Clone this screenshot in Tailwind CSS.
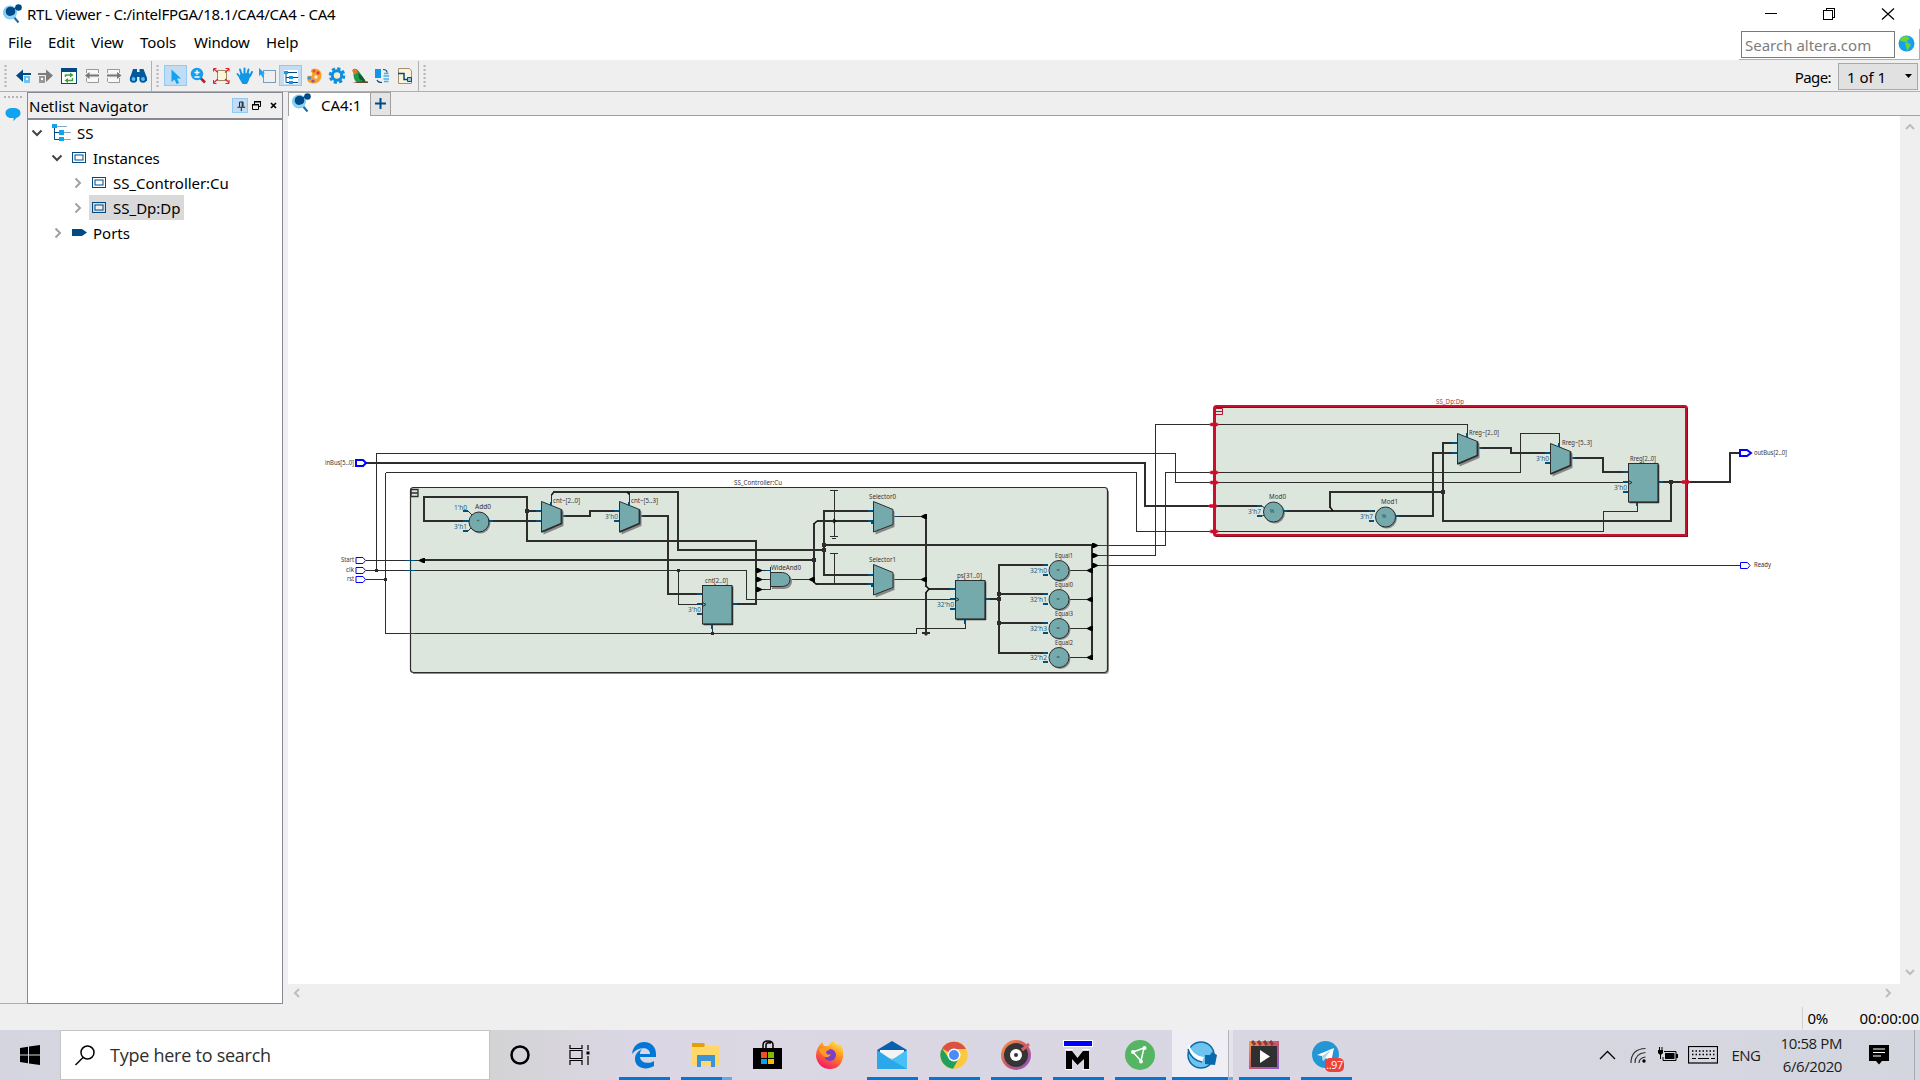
<!DOCTYPE html>
<html lang="en">
<head>
<meta charset="utf-8">
<title>RTL Viewer</title>
<script src="https://cdn.jsdelivr.net/npm/@tailwindcss/browser@4"></script>
</head>
<body class="w-[1920px] h-[1080px] overflow-hidden bg-[#efefef] text-black font-['Noto_Sans','Open_Sans',sans-serif] text-[15px] flex flex-col">

<svg width="0" height="0" class="absolute">
  <defs>
    <symbol id="logo" viewBox="0 0 20 20"><path d="M11 12l5.500 6.500" stroke="#1b6aa5" stroke-width="2"/><circle cx="8" cy="8.500" r="7" fill="#7fcdf4"/><circle cx="8.500" cy="7.500" r="4.800" fill="#004a86"/><path d="M3 10q5 4 11-.5l-.5 3q-5 3-9 1z" fill="#8fd3f5"/><path d="M9 7l6-4" stroke="#004a86" stroke-width="1.500"/><circle cx="16.500" cy="3.500" r="3.300" fill="#004a86"/></symbol>
    <symbol id="inst" viewBox="0 0 14 11"><rect x=".5" y=".5" width="13" height="10" fill="none" stroke="#004a86"/><rect x="3" y="3" width="8" height="5" fill="#fff" fill-opacity=".6" stroke="#004a86"/></symbol>
    <symbol id="down" viewBox="0 0 12 8"><path d="M1.500 1.500L6 6l4.500-4.500" fill="none" stroke="#444" stroke-width="2"/></symbol>
    <symbol id="right" viewBox="0 0 8 12"><path d="M1.500 1.500L6 6l-4.500 4.500" fill="none" stroke="#a0a0a0" stroke-width="2"/></symbol>
    <symbol id="grip" viewBox="0 0 3 22"><path d="M1.500 0v22" stroke="#b4b4b4" stroke-width="2" stroke-dasharray="2 2"/></symbol>
  </defs>
</svg>

<!-- title bar -->
<header class="h-[28px] shrink-0 bg-white flex items-center">
  <svg class="w-5 h-5 ml-[2px]"><use href="#logo"/></svg>
  <span class="ml-[5px] mt-px whitespace-nowrap tracking-[-0.24px]">RTL Viewer - C:/intelFPGA/18.1/CA4/CA4 - CA4</span>
  <svg class="ml-auto mr-[25px]" width="131" height="28" viewBox="1764 0 131 28" fill="none" stroke="#000" shape-rendering="crispEdges"><path d="M1765 13.500h12M1823.500 10.500h9v9h-9zM1826 10v-1.500h8.500v9h-2"/><path d="M1882 8.500l12 11M1894 8.500l-12 11" shape-rendering="auto" stroke-width="1.200"/></svg>
</header>

<!-- menu bar -->
<nav class="h-[33px] shrink-0 bg-white flex border-b border-[#efefef]">
  <div class="flex pl-2 pt-[3px] h-[26px] gap-4"><span class="w-[24px] whitespace-nowrap">File</span><span class="w-[27px] whitespace-nowrap">Edit</span><span class="w-[33px] whitespace-nowrap tracking-[-0.1px]">View</span><span class="w-[38px] whitespace-nowrap tracking-[-0.1px]">Tools</span><span class="w-[56px] whitespace-nowrap tracking-[-0.2px]">Window</span><span class="whitespace-nowrap tracking-[-0.1px]">Help</span></div>
  <div class="ml-auto mt-px h-[31px] w-[181px] border-b border-r border-[#b0b0b0] flex pl-[2px] pt-[2px]">
    <div class="w-[154px] h-[27px] border border-[#7a7a7a] text-[#7d7d7d] pl-[3px] leading-[26px] whitespace-nowrap">Search altera.com</div>
    <svg class="ml-[3px] mt-[4px]" width="17" height="17" viewBox="0 0 17 17"><circle cx="8.500" cy="8.500" r="8" fill="#12a0f0"/><path d="M3 2.500q4-2 7-1l2 2-3 2 1 2-2 0-3-1-3-1zM7 8l4 0 2 2-2 3-2 3-1-4z" fill="#6fd32c"/></svg>
  </div>
</nav>

<!-- toolbar -->
<div class="h-[31px] shrink-0 border-b border-[#b0b0b0] flex items-center">
  <svg class="ml-[4px] w-[3px] h-[22px]"><use href="#grip"/></svg>
  <div class="flex ml-[5px] mb-px">
    <svg width="23" height="21" viewBox="0 0 23 21"><path d="M4 10.500l7-6v3.500h8v5h-8v4z" fill="#004a86"/><rect x="11.500" y="10.500" width="7" height="8" fill="#6cc4f3" stroke="#efefef"/><rect x="14" y="13" width="2" height="2" fill="#fff"/></svg>
    <svg width="23" height="21" viewBox="0 0 23 21"><path d="M18 10.500l-7-6v3.500H3v5h8v4z" fill="#7d7d7d"/><rect x="3.500" y="10.500" width="7" height="8" fill="#999" stroke="#efefef"/><rect x="6" y="13" width="2" height="2" fill="#fff"/></svg>
    <svg width="23" height="21" viewBox="0 0 23 21"><rect x="3.500" y="3.500" width="15" height="15" fill="#fff" stroke="#004a86"/><path d="M3 3h16v4H3z" fill="#004a86"/><path d="M7.500 12v-2h5M14.500 13v2.500h-5" stroke="#3da23d" stroke-width="1.400" fill="none"/><path d="M12 7.500l3.500 2.500-3.500 2.500zM10 13l-3.500 2.500L10 18z" fill="#3da23d"/></svg>
    <svg width="23" height="21" viewBox="0 0 23 21"><path d="M5.500 8V4.500h12V8M5.500 13v3.500l1 1h11V13" fill="#f8f8f8" stroke="#999"/><path d="M7 10.500h11" stroke="#777" stroke-width="2"/><path d="M4 10.500L8.500 7v7z" fill="#777"/></svg>
    <svg width="23" height="21" viewBox="0 0 23 21"><path d="M3.500 8V4.500h12V8M3.500 13v3.500l1 1h11V13" fill="#f8f8f8" stroke="#999"/><path d="M3 10.500h11" stroke="#777" stroke-width="2"/><path d="M17.500 10.500L13 7v7z" fill="#777"/></svg>
    <svg width="23" height="21" viewBox="0 0 23 21"><path d="M6 4h4v3h2.500V4h4l3.500 9v3h-7v-4h-3v4H3v-3z" fill="#005a9c"/><circle cx="6.500" cy="14" r="3.700" fill="#005a9c"/><circle cx="16" cy="14" r="3.700" fill="#005a9c"/><circle cx="6.500" cy="14" r="1.900" fill="#5bbdf0"/><circle cx="16" cy="14" r="1.900" fill="#5bbdf0"/></svg>
  </div>
  <div class="w-px h-[30px] bg-[#b0b0b0] ml-[1px]"></div>
  <svg class="ml-[4px] w-[3px] h-[22px]"><use href="#grip"/></svg>
  <div class="flex ml-[5px] mb-px">
    <svg class="bg-[#c2dcf3]" width="23" height="21" viewBox="0 0 23 21"><rect x=".5" y=".5" width="22" height="20" fill="none" stroke="#90c8f6"/><path d="M7.500 4.500V17l3-2.500 2 4.500 2.500-1-2-4.500h4z" fill="#0fa3f2"/></svg>
    <svg width="23" height="21" viewBox="0 0 23 21"><path d="M13 12.500l5 5" stroke="#b3202c" stroke-width="2.500"/><circle cx="10" cy="9" r="6.200" fill="#14a0ee"/><path d="M10 5v5M7.500 7.500h5M7.500 12h5" stroke="#fff" stroke-width="1.300"/></svg>
    <svg width="23" height="21" viewBox="0 0 23 21"><path d="M7.500 5.500h8l1 1.500v8.500h-9z" fill="#fdf6da" stroke="#a08a60"/><path d="M4 4l4 3.500M19 4l-4 3.500M4 17.500l4-3.500M19 17.500l-4-3.500" stroke="#e0202c" stroke-width="1.200"/><path d="M3.500 6.500v-3h3M15.500 3.500h3.500v3M3.500 15v3.500h3M19 15v3.500h-3.500" fill="none" stroke="#e0202c"/></svg>
    <svg width="23" height="21" viewBox="0 0 23 21"><path d="M8.500 9L7 4.500M11.500 8V3.500M14.500 8.500l1-4M17 11l2-4M4.500 9l4 5" stroke="#1097e6" stroke-width="2" stroke-linecap="round"/><path d="M7.500 8.500l8.500-.5 1.500 2-1.500 5-2 4H9.500L6 13z" fill="#1097e6"/></svg>
    <svg width="23" height="21" viewBox="0 0 23 21"><path d="M7.500 5.500h12v12h-12z" fill="none" stroke="#004a86" stroke-dasharray="1 1"/><path d="M3 3v8l2-1.500 1.500 3 1.500-.7-1.500-3.300H9z" fill="#1ba1ee"/></svg>
    <svg class="bg-[#c2dcf3]" width="23" height="21" viewBox="0 0 23 21"><rect x=".5" y=".5" width="22" height="20" fill="none" stroke="#90c8f6"/><rect x="5" y="5" width="14" height="14" fill="#fff"/><path d="M7 8v9.500h4M7 12.500h4M13 12.500h6M13 17.500h6M9 7.500h9" stroke="#004a86" fill="none"/><path d="M5 6h4v3H5zM10 11h4v3h-4zM10 16h4v3h-4z" fill="#0f97e8"/></svg>
    <svg width="23" height="21" viewBox="0 0 23 21"><path d="M12 3.500c5 0 8 3 7.500 7.500-.5 5-4 7.500-8.500 7.500S4.500 15 5 12q1-2 3-1 3 0 2-3-3-3 2-4.500z" fill="#f7a12a"/><circle cx="7.500" cy="13" r="1.800" fill="#3c8fe0"/><circle cx="11" cy="16" r="1.600" fill="#8a4fc0"/><circle cx="14" cy="12" r="1.700" fill="#efefef"/><circle cx="16" cy="8" r="1.700" fill="#e0383c"/><circle cx="12" cy="6" r="1.500" fill="#d8542a"/></svg>
    <svg width="23" height="21" viewBox="0 0 23 21"><circle cx="12" cy="10.500" r="7" fill="none" stroke="#0b8fe0" stroke-width="2.600" stroke-dasharray="3.200 2.300"/><circle cx="12" cy="10.500" r="4.700" fill="#fce9c8" stroke="#0b8fe0" stroke-width="3"/></svg>
    <svg width="23" height="21" viewBox="0 0 23 21"><path d="M5 4q4-1 6 2.500l6 8.500 1 3H9Q5 14 5.500 8z" fill="#1f9a48"/><path d="M4 5.500Q6 2.500 9 4.500l.5 3.500-3 1.500z" fill="#e3762a"/><path d="M10 8q6 4 7.500 9l-6-3z" fill="#0c5a34"/><path d="M4 18h16v-1.500l-5-.5z" fill="#6a4630"/></svg>
    <svg width="23" height="21" viewBox="0 0 23 21"><path d="M4 4h6v9H4z" fill="#0f97e8"/><path d="M13 8.500h4.500M12.500 11h5.500M12.500 14h5.500M13 16.500h4.500" stroke="#4aaee8" stroke-width="1.500"/><path d="M12 4.500q4 0 4 3M6 15q1 2.500 5 2.500" fill="none" stroke="#004a86" stroke-width="1.200"/></svg>
    <svg width="23" height="21" viewBox="0 0 23 21"><path d="M4.500 3.500h11l2 2.500v12.500h-13z" fill="#fdf3d8" stroke="#a39272"/><path d="M4 8.500h6v6h8" fill="none" stroke="#004a86" stroke-width="1.500"/><path d="M13.500 12.500h4v4h-4z" fill="#8ccbf0" stroke="#004a86"/></svg>
  </div>
  <div class="w-px h-[30px] bg-[#b0b0b0] ml-[1px]"></div>
  <svg class="ml-[4px] w-[3px] h-[22px]"><use href="#grip"/></svg>
  <span class="ml-auto mt-[2px] tracking-[-0.6px]">Page:</span>
  <div class="ml-[7px] mr-[2px] w-[80px] h-[27px] border border-[#a8a8a8] bg-[#e1e1e1] flex items-center justify-between pl-[8px] pr-[5px]"><span class="mt-[2px]">1 of 1</span><svg width="7" height="5"><path d="M0 0h7L3.500 4z"/></svg></div>
</div>

<!-- work area -->
<main class="h-[912px] shrink-0 flex">
  <aside class="w-[27px] border-b border-[#b0b0b0] flex flex-col items-start">
    <svg class="mt-[4px] ml-[4px]" width="19" height="2"><path d="M0 1h19" stroke="#b4b4b4" stroke-width="2" stroke-dasharray="2 2"/></svg>
    <svg class="mt-[9px] ml-[5px]" width="16" height="15" viewBox="0 0 16 15"><path d="M8 1c5 0 7.500 2 7.500 5S13 10.500 11 11q-.5 2-3 3 1-1 .5-3C3 11.500 .5 9 .5 6s2.500-5 7.500-5z" fill="#0fa3f2"/></svg>
  </aside>
  <section class="w-[256px] bg-white border border-[#858992] flex flex-col">
    <div class="h-[27px] bg-[#efefef] border-b-2 border-[#858992] flex items-center pl-[1px] pr-[3px]">
      <span class="mt-[2px]">Netlist Navigator</span>
      <div class="ml-auto flex items-center">
        <svg class="bg-[#c2dcf3] border border-[#90c8f6]" width="16" height="15" viewBox="0 0 16 15" fill="none" stroke="#000"><path d="M7.500 9V3.500h4V9M5 9.500h9M9.500 10v4M10.500 4v5"/></svg>
        <svg class="ml-[4px]" width="9" height="9" viewBox="0 0 9 9" fill="none" stroke="#000"><path d="M2.500 3V1h6v4.500H7M.5 4h6v4.500h-6zM0 3.500h7M2 .5h7"/></svg>
        <svg class="ml-[9px] mr-[2px]" width="7" height="7" viewBox="0 0 7 7"><path d="M1 1l5 5M6 1L1 6" stroke="#000" stroke-width="1.700"/></svg>
      </div>
    </div>
    <div class="flex flex-col leading-[25px]">
      <div class="h-[25px] flex items-center pl-[3px]"><svg class="w-3 h-2"><use href="#down"/></svg><svg class="ml-[9px]" width="19" height="18" viewBox="0 0 19 18"><path d="M2.500 2v13.500H19M2 8.500h17M4 2.500h11" fill="none" stroke="#8aa7c4"/><path d="M2.500 4v11.500h5M2.500 8.500h5" fill="none" stroke="#004a86"/><path d="M0 0h5v4H0zM7 6h5v5H7zM7 13h5v4H7z" fill="#0fa3f2"/></svg><span class="ml-[6px] mt-px">SS</span></div>
      <div class="h-[25px] flex items-center pl-[23px]"><svg class="w-3 h-2"><use href="#down"/></svg><svg class="ml-[9px] w-[14px] h-[11px]"><use href="#inst"/></svg><span class="ml-[7px] mt-px tracking-[-0.1px]">Instances</span></div>
      <div class="h-[25px] flex items-center pl-[46px]"><svg class="w-2 h-3"><use href="#right"/></svg><svg class="ml-[10px] w-[14px] h-[11px]"><use href="#inst"/></svg><span class="ml-[7px] mt-px tracking-[-0.05px]">SS_Controller:Cu</span></div>
      <div class="h-[25px] flex items-center pl-[46px]"><svg class="w-2 h-3"><use href="#right"/></svg><div class="ml-[7px] pl-[3px] pr-[3px] h-[25px] flex items-center bg-[#d9d9d9]"><svg class="w-[14px] h-[11px]"><use href="#inst"/></svg><span class="ml-[7px] mt-px">SS_Dp:Dp</span></div></div>
      <div class="h-[25px] flex items-center pl-[26px]"><svg class="w-2 h-3"><use href="#right"/></svg><svg class="ml-[10px]" width="15" height="9"><path d="M0 1h10l5 3.500L10 8H0z" fill="#004a86"/></svg><span class="ml-[6px] mt-px">Ports</span></div>
    </div>
  </section>

  <section class="ml-[5px] flex-1 flex flex-col">
    <div class="h-[24px] flex border-b border-[#a0a0a0]">
      <div class="w-[82px] h-[24px] bg-white border-l border-t border-[#a0a0a0] flex items-start"><svg class="w-5 h-5 ml-[2px]"><use href="#logo"/></svg><span class="ml-[10px] leading-[24px]">CA4:1</span></div>
      <div class="w-[21px] h-[23px] border border-b-0 border-[#a0a0a0] bg-[#e4e4e4] flex items-start pt-[5px] justify-center"><svg width="11" height="11"><path d="M5.500 0v11M0 5.500h11" stroke="#004a86" stroke-width="2"/></svg></div>
    </div>
    <div class="flex">
      <svg class="bg-white" width="1612" height="868" viewBox="288 116 1612 868" font-size="6.200" font-family="Noto Sans, sans-serif">
        <defs>
          <g id="mux"><path d="M2 2v31l20-8.500V10z" fill="#888"/><path d="M0 0v30.500L20 22V8z" fill="#75aaad" stroke="#2d2d2d"/><path d="M0 30.500L20 22V8" fill="none" stroke="#2d2d2d" stroke-width="1.800"/></g>
          <g id="sel"><path d="M2 2v31l19-7.500V10z" fill="#888"/><path d="M0 0v30.500L19.500 23V8z" fill="#75aaad" stroke="#2d2d2d"/></g>
          <g id="op"><circle cx="1.200" cy="1.200" r="10.200" fill="#888"/><circle r="10" fill="#75aaad" stroke="#2d2d2d"/></g>
          <g id="reg"><rect width="29.500" height="38.500" fill="#75aaad" stroke="#2d2d2d"/><path d="M1 39h29.500M30 1v38.500" stroke="#2d2d2d" stroke-width="1.500"/><path d="M0 17l3.500 2L0 21" fill="none" stroke="#2d2d2d"/></g>
          <path id="port" d="M.5-3h7L10 0 7.500 3h-7z" fill="#fff" stroke="#00f"/>
          <path id="arrow" d="M-2-2.500h2L4-.5v1L0 2.500h-2z" fill="#000"/>
          <path id="arrowin" d="M2-2.500H0L-4-.5v1L0 2.500h2z" fill="#000"/>
          <g id="rport"><path d="M-5 0H5M-3.500-1h7M-3.500 1h7" stroke="#c8102e" stroke-width="1.300"/></g>
        </defs>

        <!-- module frames -->
        <path d="M413 673.500h693q2.500 0 2.500-3V491" fill="none" stroke="#8e8e8e"/>
        <rect x="410.500" y="487.500" width="697" height="185" rx="3" fill="#dce6dd" stroke="#2d2d2d" stroke-width="1.200"/>
        <path d="M411 489.500h7v7h-7zM411 493h7" fill="none" stroke="#2d2d2d" stroke-width="1.300"/>
        <rect x="1214.500" y="406.500" width="472" height="129" rx="2" fill="#dce6dd" stroke="#c8102e" stroke-width="3"/>
        <path d="M1216 407.500h469M1687.500 408v128M1216 536.500h472" stroke="#860d22" fill="none"/>
        <path d="M1215 408.500h7.500v6h-7.500M1215 411.500h7" fill="none" stroke="#b3152c"/>

        <!-- single-bit nets -->
        <g fill="none" stroke="#2d2d2d" shape-rendering="crispEdges">
          <path d="M366 570.500h380.500v29H955M376.500 570.500v-117h799v29H1628M678.500 570.500v34H702"/>
          <path d="M366 579.500h19.500M385.500 472.500h751v59h467v-20h34V502M385.500 472.500v161h531v-5h49V619M712.500 633.500V624"/>
          <path d="M366 560.500h58M551.500 504v-10M629.500 504v-11M790 579.500h23M760 570.500h11M760 579.500h11M760 589.500h11M770.500 567v23"/>
          <path d="M830 490.500h8M834.500 490v46M830 536.500h8M832 538.500h4M830 553.500h8M834.500 553v30"/>
          <path d="M893 516.500h32M893 579.500h32M1069 570.500h23M1069 599.500h23M1069 628.500h23M1069 657.500h23"/>
          <path d="M1096 545.500h69.500v-73h355v-39h39V446M1096 555.500h59.500v-131h312V435M1096 565.500h644"/>
        </g>
        <!-- buses -->
        <g fill="none" stroke="#2d2d2d" stroke-width="2" shape-rendering="crispEdges">
          <path d="M366 463h779v43h117"/>
          <path d="M469 521h-45v-24h103v44h229v63h-23M489 521h53M527 511h15M562 516h28v-5h30M553 492h125v58h146M640 516h28v78h34"/>
          <path d="M420 560h394M814 583v-60M817 521h56M816 584h57M873 511h-49v64h49M824 545h268M926 516v71M926 592v41M928 589h27M922 632.500h8"/>
          <path d="M986 599h13M1048 565h-49v88h49M999 594h49M999 623h49M1092 545v115"/>
          <path d="M1283 511h92M1330 508v-16h113M1395 516h38v-63h24M1457 443h-14v78h228v-39M1478 448h33v5h39M1571 458h32v14h25M1659 482h71v-29h9"/>
        </g>
        <path d="M551.500 495l2-2.500M627 492l2.500 2.500M814 524l3-3M814 582l2.500 2.500M926 586l3 3-3 3.500M833.500 519l2 2-2 2M1330 507l3 4" fill="none" stroke="#111" stroke-width="1.500"/>
        <g fill="#2d2d2d">
          <path d="M525 509h4v4h-4zM375 569h3v3h-3zM384 578h3v3h-3zM677 569h3v3h-3zM711 632h3v3h-3zM812 558h4v4h-4zM822 543h4v4h-4zM822 548h4v4h-4zM997 592h4v4h-4zM997 597h4v4h-4zM997 621h4v4h-4zM1441 490h4v4h-4zM1669 480h4v4h-4zM1321 510h2v2h-2zM922 632h8l-4 4z"/>
        </g>
        <use href="#arrow" x="758" y="570.500"/><use href="#arrow" x="758" y="579.500"/><use href="#arrow" x="758" y="589.500"/>
        <use href="#arrow" x="1094" y="545.500"/><use href="#arrow" x="1094" y="555.500"/><use href="#arrow" x="1094" y="565.500"/>
        <use href="#arrowin" x="423" y="560.500"/><use href="#arrowin" x="813" y="579.500"/><use href="#arrowin" x="925" y="516.500"/><use href="#arrowin" x="925" y="579.500"/>
        <use href="#arrowin" x="1091" y="570.500"/><use href="#arrowin" x="1091" y="599.500"/><use href="#arrowin" x="1091" y="628.500"/><use href="#arrowin" x="1091" y="657.500"/>

        <!-- pin stubs -->
        <g stroke="#00507f" stroke-width="2" shape-rendering="crispEdges">
          <path d="M463 521h6M463 511h5M463 531h5M488 521h5M536 511h6M536 521h6M561 516h5M614 511h6M614 521h6M639 516h5M551 502v4M629 502v4"/>
          <path d="M697 594h6M697 604h6M697 614h6M733 604h4M712 624v5M868 511h6M868 521h6M868 575h6M868 584h6M871 523h3M871 586h3"/>
          <path d="M950 589h5M950 599h5M950 609h5M986 599h4M965 619v5M1043 565h5M1043 575h5M1043 594h5M1043 604h5M1043 623h5M1043 633h5M1043 653h5M1043 662h5"/>
          <path d="M1257 506h5M1257 516h5M1283 511h4M1369 511h5M1369 521h5M1395 516h4M1452 443h5M1452 453h5M1477 448h5M1467 433v4M1545 453h5M1545 463h5M1571 458h4M1559 443v4M1623 472h5M1623 482h5M1623 492h5M1659 482h4M1637 501v5"/>
        </g>
        <path d="M406 560.500h9M406 570.500h9M406 633.500h9M1100 545.500h11M1100 555.500h11M1100 565.500h11M790 579.500h4M893 516.500h4M893 579.500h4M766 570.500h5M766 579.500h5M766 589.500h5" stroke="#00507f" shape-rendering="crispEdges"/>
        <path d="M468 511l4 4M468 531l4-4M1262 506l4 3M1262 516l3-1" stroke="#2d2d2d"/>

        <!-- cells -->
        <use href="#op" x="479" y="522"/><use href="#mux" x="541.500" y="501.500"/><use href="#mux" x="619.500" y="501.500"/>
        <use href="#reg" x="702.500" y="585.500"/><use href="#reg" x="955.500" y="580.500"/><use href="#reg" x="1628.500" y="463.500"/>
        <path d="M772 574h12q8 1 8 7.500t-8 7.500h-12z" fill="#888"/><path d="M770.500 572.500h12q7.500 1 7.500 7t-7.500 7h-12z" fill="#75aaad" stroke="#2d2d2d"/>
        <use href="#sel" x="873.500" y="501.500"/><use href="#sel" x="873.500" y="564.500"/>
        <use href="#op" x="1059" y="570.500"/><use href="#op" x="1059" y="599.500"/><use href="#op" x="1059" y="628.500"/><use href="#op" x="1059" y="657.500"/>
        <use href="#op" x="1273.500" y="512"/><use href="#op" x="1385.500" y="517"/>
        <use href="#mux" x="1457.500" y="433.500"/><use href="#mux" x="1550.500" y="443.500"/>
        <path d="M551 502v4M629 502v4M1467 434v3M1559 444v3M488 521h3M1283 511h3M1395 516h3" stroke="#00507f" stroke-width="2"/>
        <use href="#port" x="355.500" y="560.500"/><use href="#port" x="355.500" y="570.500"/><use href="#port" x="355.500" y="579.500"/><use href="#port" x="1740" y="565.500"/>
        <path d="M356 460h7l3 3-3 3h-7zM1740 450h7l4 3-4 3h-7z" fill="#fff" stroke="#00f" stroke-width="2"/>
        <use href="#rport" x="1214" y="424.500"/><use href="#rport" x="1214" y="472.500"/><use href="#rport" x="1214" y="482.500"/><use href="#rport" x="1213" y="506"/><use href="#rport" x="1214" y="531.500"/><use href="#rport" x="1685.500" y="482"/>

        <!-- net and cell names -->
        <g fill="#3c2f33">
          <text x="325" y="465" textLength="29" lengthAdjust="spacingAndGlyphs">inBus[5..0]</text><text x="341" y="562" textLength="13" lengthAdjust="spacingAndGlyphs">Start</text><text x="346" y="572" textLength="8" lengthAdjust="spacingAndGlyphs">clk</text><text x="347" y="581" textLength="7" lengthAdjust="spacingAndGlyphs">rst</text>
          <text x="475" y="509" textLength="16" lengthAdjust="spacingAndGlyphs">Add0</text><text x="553" y="503" textLength="27" lengthAdjust="spacingAndGlyphs">cnt~[2..0]</text><text x="631" y="503" textLength="27" lengthAdjust="spacingAndGlyphs">cnt~[5..3]</text>
          <text x="705" y="583" textLength="23" lengthAdjust="spacingAndGlyphs">cnt[2..0]</text><text x="771" y="570" textLength="30" lengthAdjust="spacingAndGlyphs">WideAnd0</text><text x="734" y="485" textLength="48" lengthAdjust="spacingAndGlyphs">SS_Controller:Cu</text>
          <text x="869" y="499" textLength="27" lengthAdjust="spacingAndGlyphs">Selector0</text><text x="869" y="562" textLength="27" lengthAdjust="spacingAndGlyphs">Selector1</text><text x="957" y="578" textLength="25" lengthAdjust="spacingAndGlyphs">ps[31..0]</text>
          <text x="1055" y="558" textLength="18" lengthAdjust="spacingAndGlyphs">Equal1</text><text x="1055" y="587" textLength="18" lengthAdjust="spacingAndGlyphs">Equal0</text><text x="1055" y="616" textLength="18" lengthAdjust="spacingAndGlyphs">Equal3</text><text x="1055" y="645" textLength="18" lengthAdjust="spacingAndGlyphs">Equal2</text>
          <text x="1269" y="499" textLength="17" lengthAdjust="spacingAndGlyphs">Mod0</text><text x="1381" y="504" textLength="17" lengthAdjust="spacingAndGlyphs">Mod1</text><text x="1469" y="435" textLength="30" lengthAdjust="spacingAndGlyphs">Rreg~[2..0]</text><text x="1562" y="445" textLength="30" lengthAdjust="spacingAndGlyphs">Rreg~[5..3]</text><text x="1630" y="461" textLength="26" lengthAdjust="spacingAndGlyphs">Rreg[2..0]</text>
          <text x="1754" y="455" textLength="33" lengthAdjust="spacingAndGlyphs">outBus[2..0]</text><text x="1754" y="567" textLength="17" lengthAdjust="spacingAndGlyphs">Ready</text>
        </g>
        <text x="1436" y="404" textLength="28" lengthAdjust="spacingAndGlyphs" fill="#b83445">SS_Dp:Dp</text>
        <g fill="#1f5f82">
          <text x="454" y="510" textLength="13" lengthAdjust="spacingAndGlyphs">1'h0</text><text x="454" y="529" textLength="13" lengthAdjust="spacingAndGlyphs">3'h1</text><text x="605" y="519" textLength="13" lengthAdjust="spacingAndGlyphs">3'h0</text><text x="688" y="612" textLength="13" lengthAdjust="spacingAndGlyphs">3'h0</text>
          <text x="937" y="607" textLength="17" lengthAdjust="spacingAndGlyphs">32'h0</text><text x="1030" y="573" textLength="17" lengthAdjust="spacingAndGlyphs">32'h0</text><text x="1030" y="602" textLength="17" lengthAdjust="spacingAndGlyphs">32'h1</text><text x="1030" y="631" textLength="17" lengthAdjust="spacingAndGlyphs">32'h3</text><text x="1030" y="660" textLength="17" lengthAdjust="spacingAndGlyphs">32'h2</text>
          <text x="1248" y="514" textLength="13" lengthAdjust="spacingAndGlyphs">3'h7</text><text x="1360" y="519" textLength="13" lengthAdjust="spacingAndGlyphs">3'h7</text><text x="1536" y="461" textLength="13" lengthAdjust="spacingAndGlyphs">3'h0</text><text x="1614" y="490" textLength="13" lengthAdjust="spacingAndGlyphs">3'h0</text>
        </g>
        <g fill="#234a4f" font-size="5.500" text-anchor="middle"><text x="478" y="523">+</text><text x="1058" y="572">=</text><text x="1058" y="601">=</text><text x="1058" y="630">=</text><text x="1058" y="659">=</text><text x="1272" y="513">%</text><text x="1384" y="518">%</text></g>
      </svg>
      <div class="w-5 flex flex-col items-center justify-between pt-[7px] pb-[8px]">
        <svg width="10" height="7"><path d="M1 6l4-4 4 4" fill="none" stroke="#bdbdbd" stroke-width="2"/></svg>
        <svg width="10" height="7"><path d="M1 1l4 4 4-4" fill="none" stroke="#bdbdbd" stroke-width="2"/></svg>
      </div>
    </div>
    <div class="h-[18px] flex items-center justify-between pl-[5px] pr-[28px]">
      <svg width="7" height="10"><path d="M6 1L2 5l4 4" fill="none" stroke="#bdbdbd" stroke-width="2"/></svg>
      <svg width="7" height="10"><path d="M1 1l4 4-4 4" fill="none" stroke="#bdbdbd" stroke-width="2"/></svg>
    </div>
  </section>
</main>

<!-- status bar -->
<footer class="h-[26px] shrink-0 flex justify-end items-center pr-[1px] pt-[2px]">
  <div class="border-l border-[#d0d0d0] h-[22px] pl-[4px] w-[57px] leading-[23px] tracking-[-0.2px]">0%</div><span class="mt-px">00:00:00</span>
</footer>

<!-- taskbar -->
<div class="h-[50px] shrink-0 flex bg-linear-to-r from-[#d5d5e0] via-[#dbd7e4] via-40% to-[#d4d6df] font-['Open_Sans','Noto_Sans',sans-serif]">
  <div class="w-[60px] flex items-center justify-center"><svg width="20" height="20" viewBox="0 0 20 20"><path d="M0 3l8-1.200v7.700H0zM9 1.600L20 0v9.500H9zM0 10.500h8v7.700L0 17zM9 10.500h11V20L9 18.400z"/></svg></div>
  <div class="w-[430px] h-[50px] bg-white border border-[#c4c4c8] flex items-center text-[18px] text-[#2e2e2e]"><svg class="ml-[14px]" width="20" height="21" viewBox="0 0 20 21" fill="none" stroke="#000" stroke-width="1.500"><circle cx="12.500" cy="7.500" r="6.500"/><path d="M8 12.500L.5 20"/></svg><span class="ml-[15px] tracking-[-0.25px]">Type here to search</span></div>
  <div class="w-[123px] bg-linear-to-r from-[#d3d3d4] to-[#dad6e2] flex items-center"><svg class="ml-[20px]" width="20" height="20"><circle cx="10" cy="10" r="8.500" fill="none" stroke="#000" stroke-width="2.500"/></svg>
    <svg class="ml-[39px]" width="22" height="20" viewBox="0 0 22 20" fill="none" stroke="#000" stroke-width="1.200"><path d="M1 0v3.500h12V0M1 5.500h12v8H1zM1 20v-4.500h12V20M19 0v5M19 11v9"/><path d="M17.500 6.500h3v3h-3z" fill="#000" stroke="none"/></svg></div>
  <div class="flex">
    <div class="w-[62px] flex flex-col items-center justify-end"><svg class="mb-[7px]" width="30" height="30" viewBox="0 0 30 30"><path d="M3 14C4 6 9 2 15 2c8 0 12 6 12 12v3H11c0 5 8 8 14 4v5c-8 5-19 2-19-7 0-5 3-8 7-10-2 2-2 4-2 5h10c0-7-11-8-18 0z" fill="#0078d7"/></svg><div class="w-[51px] h-[3px] bg-[#0078d7]"></div></div>
    <div class="w-[62px] flex flex-col items-center justify-end"><svg class="mb-[7px]" width="30" height="30" viewBox="0 0 30 30"><path d="M1 3h12l1 3h14v20H1z" fill="#ffd869"/><path d="M1 3h12l1 2-1 2H1z" fill="#e3a008"/><path d="M6 27V15h18v12h-4v-6H10v6z" fill="#3a94d8"/></svg><div class="w-[51px] h-[3px] bg-[#0078d7] flex justify-end"><div class="w-[10px] bg-[#60aee8]"></div></div></div>
    <div class="w-[62px] flex flex-col items-center justify-end"><svg class="mb-[10px]" width="30" height="30" viewBox="0 0 30 30"><path d="M10 8V5q0-4 5-4t5 4v3M13 8V5q0-3 5-2" fill="none" stroke="#000" stroke-width="1.500"/><path d="M0 8h29v21H0z"/><path d="M8 12h6v6H8z" fill="#f25022"/><path d="M15 12h6v6h-6z" fill="#7fba00"/><path d="M8 19h6v5H8z" fill="#00a4ef"/><path d="M15 19h6v5h-6z" fill="#ffb900"/></svg></div>
    <div class="w-[62px] flex flex-col items-center justify-end"><svg class="mb-[10px]" width="30" height="30" viewBox="0 0 30 30"><defs><linearGradient id="fx" x1=".8" y1="0" x2=".3" y2="1"><stop offset="0" stop-color="#fff14a"/><stop offset=".45" stop-color="#ff8a1e"/><stop offset="1" stop-color="#f0146a"/></linearGradient></defs><path d="M4 6l3-4 2 4 5 0q1-4 5-6 0 4 4 5l2-1q4 5 3 13-2 12-13 12T1 17Q1 10 4 6z" fill="url(#fx)"/><circle cx="15" cy="15" r="6" fill="#7b3fd0"/><path d="M4 9q6-3 11 1-4 0-4 3 2 3 5 1-2 4-6 3-5-3-6-8z" fill="#ff9a22"/></svg></div>
    <div class="w-[62px] flex flex-col items-center justify-end"><svg class="mb-[7px]" width="30" height="30" viewBox="0 0 30 30"><path d="M0 10L15 1l15 9v6H0z" fill="#0a5fae"/><path d="M3 10h24v8H3z" fill="#f4f4f4"/><path d="M0 10l15 10 15-10v19H0z" fill="#2aa8ea"/><path d="M30 10v19L15 20z" fill="#46c0f5"/></svg><div class="w-[51px] h-[3px] bg-[#0078d7]"></div></div>
    <div class="w-[62px] flex flex-col items-center justify-end"><svg class="mb-[7px]" width="30" height="30" viewBox="0 0 30 30"><circle cx="15" cy="15" r="13.700" fill="#fcc93e"/><path d="M15 15L3 8.500A13.700 13.700 0 0 1 27 9H15z" fill="#dd5144"/><path d="M3 8.500A13.700 13.700 0 0 0 14 28.700L20 18l-9.500 1z" fill="#1fa15d"/><circle cx="15" cy="15" r="6.500" fill="#fff"/><circle cx="15" cy="15" r="5" fill="#4c8bf5"/></svg><div class="w-[51px] h-[3px] bg-[#0078d7]"></div></div>
    <div class="w-[62px] flex flex-col items-center justify-end"><svg class="mb-[7px]" width="30" height="30" viewBox="0 0 30 30"><defs><linearGradient id="gr" x1="0" y1="0" x2="1" y2="1"><stop offset="0" stop-color="#ff9a3c"/><stop offset=".5" stop-color="#c8586c"/><stop offset="1" stop-color="#8858d8"/></linearGradient></defs><circle cx="15" cy="15" r="15" fill="url(#gr)"/><circle cx="15" cy="15" r="12" fill="#353535"/><path d="M21 10l7-6" stroke="#d8605c" stroke-width="3"/><circle cx="15" cy="15" r="6" fill="#fff"/><circle cx="15" cy="15" r="2" fill="#333"/></svg><div class="w-[51px] h-[3px] bg-[#0078d7]"></div></div>
    <div class="w-[62px] flex flex-col items-center justify-end"><svg class="mb-[7px]" width="30" height="30" viewBox="0 0 30 30"><path d="M0 0h30v7H0z" fill="#fff"/><path d="M1 1h28v5H1z" fill="#00f"/><path d="M3 11h6l5.500 7 5.500-7h6v18h-5V19l-6.500 6-5.500-6v10H3z"/><path d="M2 9.500h8M19 9.500h8M2 29.500h8M19 29.500h8" stroke="#fff"/></svg><div class="w-[51px] h-[3px] bg-[#0078d7]"></div></div>
    <div class="w-[62px] flex flex-col items-center justify-end"><svg class="mb-[7px]" width="30" height="30" viewBox="0 0 30 30"><circle cx="15" cy="15" r="15" fill="#55b563"/><path d="M8 12l11-4-3 13z" fill="none" stroke="#fff" stroke-width="1.500"/><g fill="#fff"><circle cx="8" cy="12" r="2"/><circle cx="19.500" cy="8" r="2"/><circle cx="16" cy="21.500" r="2"/></g></svg><div class="w-[51px] h-[3px] bg-[#0078d7]"></div></div>
    <div class="w-[62px] flex"><div class="ml-[1px] w-[56px] bg-[#efeef4] flex flex-col items-center justify-end"><svg class="mb-[7px] ml-[4px]" width="30" height="30" viewBox="0 0 30 30"><circle cx="14" cy="15" r="13" fill="#6ec3f0" stroke="#0a6aa8" stroke-width="1.500"/><path d="M2 4q3 12 15 13l-2 5Q2 18 1 8z" fill="#fff"/><path d="M1 9q3 11 14 13" fill="none" stroke="#0a6aa8" stroke-width="1.500"/><path d="M18 15l5 0 2-3 5 3-2 10-10-1z" fill="#0a69ad"/></svg><div class="w-full h-[3px] bg-[#0078d7]"></div></div><div class="w-[5px] border-l border-[#b4b4bc] bg-[#e4e4ea] flex items-end"><div class="w-full h-[3px] bg-[#60aee8]"></div></div></div>
    <div class="w-[62px] flex flex-col items-center justify-end"><svg class="mb-[7px]" width="30" height="30" viewBox="0 0 30 30"><path d="M0 1h30v28H0z" fill="url(#gr)"/><path d="M2 6h26v21H2z" fill="#303030"/><path d="M3 1l3 4M9 1l3 4M15 1l3 4M21 1l3 4" stroke="#8c3b3b" stroke-width="3"/><path d="M11 10v13l10-6.500z" fill="#fff"/></svg><div class="w-[51px] h-[3px] bg-[#0078d7]"></div></div>
    <div class="w-[62px] flex flex-col items-center justify-end relative"><svg class="mb-[7px]" width="30" height="30" viewBox="0 0 30 30"><circle cx="14.500" cy="14.500" r="13.500" fill="#2397d4"/><path d="M6 15l17-7-3 14-5-4-3 3-1-5z" fill="#fff"/><path d="M11 16l9-6-6 8-2 3z" fill="#b8d4e8"/></svg><div class="w-[51px] h-[3px] bg-[#0078d7]"></div><div class="absolute left-[30px] top-[28px] w-[19px] h-[14px] rounded-[5px] bg-[#f0403c] text-white text-[11px] leading-[14px] text-center tracking-[-0.5px]">..97</div></div>
  </div>
  <div class="ml-auto flex items-center text-[#1c1c1c] text-[15px]">
    <svg width="17" height="10" viewBox="0 0 17 10"><path d="M1 9l7.500-7.500L16 9" fill="none" stroke="#000" stroke-width="1.300"/></svg>
    <svg class="ml-[14px]" width="17" height="17" viewBox="0 0 17 17" fill="none" stroke="#333" stroke-width="1.200"><path d="M1 16Q1 2 15.500 1.500M5 16Q5 6.500 15.500 5.500M9 16q0-5 6.500-6"/><circle cx="14" cy="14" r="1.700" fill="#000" stroke="none"/></svg>
    <svg class="ml-[11px]" width="20" height="16" viewBox="0 0 20 16"><path d="M6 4.500h12v9H5V10" fill="none" stroke="#000"/><path d="M7 6h9.500v6H7zM18 7h2v4h-2zM0 3h5v3l-1.500 1.500h-2L0 6zM1 0h1v3H1zM3.500 0h1v3h-1zM2 7h1v5H2z"/></svg>
    <svg class="ml-[10px]" width="30" height="18" viewBox="0 0 30 18"><rect x=".5" y=".5" width="29" height="16.500" fill="none" stroke="#000" stroke-width="1.200"/><path d="M4 5h23M4 8.500h23" stroke="#000" stroke-width="1.500" stroke-dasharray="1.500 2"/><path d="M4 12.500h4M10 12.500h11M23 12.500h4" stroke="#000"/></svg>
    <span class="ml-[13px] tracking-[-0.5px]">ENG</span>
    <div class="ml-[20px] text-right leading-[23px] tracking-[-0.4px]"><div>10:58 PM</div><div>6/6/2020</div></div>
    <svg class="ml-[27px]" width="20" height="20" viewBox="0 0 20 20"><path d="M0 0h20v16h-7l-3 3.500L7 16H0z"/><path d="M4 4h12M4 7.500h12M4 11h8" stroke="#fff" stroke-width="1.200"/></svg>
    <div class="ml-[25px] mr-[5px] w-px h-[50px] bg-[#a8a8b0]"></div>
  </div>
</div>
</body>
</html>
